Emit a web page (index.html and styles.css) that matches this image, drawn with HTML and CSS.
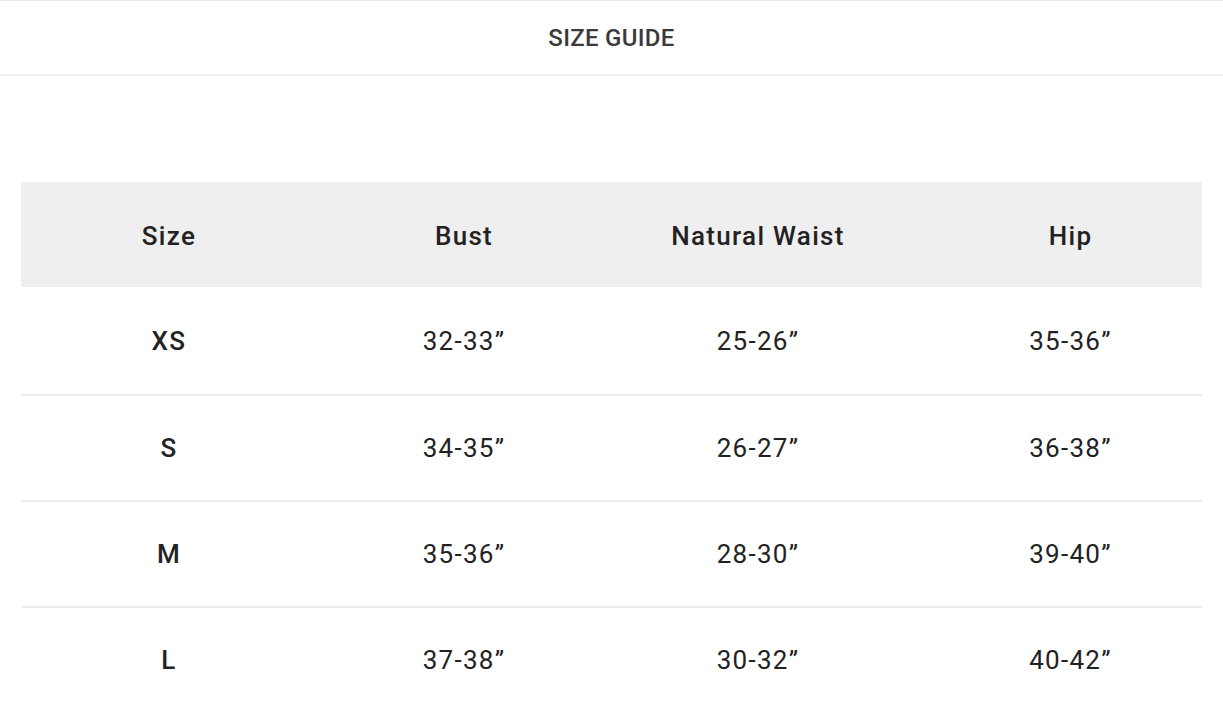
FILE: index.html
```html
<!DOCTYPE html>
<html>
<head>
<meta charset="utf-8">
<link rel="stylesheet" href="styles.css">
</head>
<body>
<header class="topbar"><h1 class="title">SIZE GUIDE</h1></header>
<main class="content">
  <div class="table">
    <div class="row head">
      <div class="cell">Size</div><div class="cell">Bust</div><div class="cell">Natural Waist</div><div class="cell last">Hip</div>
    </div>
    <div class="row first">
      <div class="cell size">XS</div><div class="cell">32-33”</div><div class="cell">25-26”</div><div class="cell last">35-36”</div>
    </div>
    <div class="row">
      <div class="cell size">S</div><div class="cell">34-35”</div><div class="cell">26-27”</div><div class="cell last">36-38”</div>
    </div>
    <div class="row">
      <div class="cell size">M</div><div class="cell">35-36”</div><div class="cell">28-30”</div><div class="cell last">39-40”</div>
    </div>
    <div class="row">
      <div class="cell size">L</div><div class="cell">37-38”</div><div class="cell">30-32”</div><div class="cell last">40-42”</div>
    </div>
  </div>
</main>
</body>
</html>
```
FILE: styles.css
```css
html, body { margin: 0; padding: 0; background: #fff; }
body { font-family: Roboto, "Liberation Sans", sans-serif; color: #222; overflow: hidden; height: 706px; }
.topbar {
  border-top: 1px solid #ececec;
  border-bottom: 2px solid #f3f3f3;
  display: flex;
  align-items: center;
  justify-content: center;
  box-sizing: border-box;
  height: 76px;
}
.title {
  margin: 0;
  font-family: Roboto, "Liberation Sans", sans-serif;
  font-weight: 500;
  font-size: 24px;
  letter-spacing: 0.3px;
  color: #3a3a3a;
  padding-top: 1px;
}
.content { padding: 106px 21px 0 21px; }
.table { display: flex; flex-direction: column; }
.row {
  display: grid;
  grid-template-columns: 296px 294px 294px 1fr;
  height: 104px;
  align-items: center;
  border-bottom: 2px solid #ededed;
  font-size: 26px;
}
.row.first { height: 106px; padding-top: 1px; }
.row.head { background: #efefef; border-bottom: none; font-weight: 500; height: 102px; padding-top: 3px; }
.cell { text-align: center; letter-spacing: 1.3px; }
.cell.last { padding-left: 34px; }
.cell.size { font-weight: 500; }
```
